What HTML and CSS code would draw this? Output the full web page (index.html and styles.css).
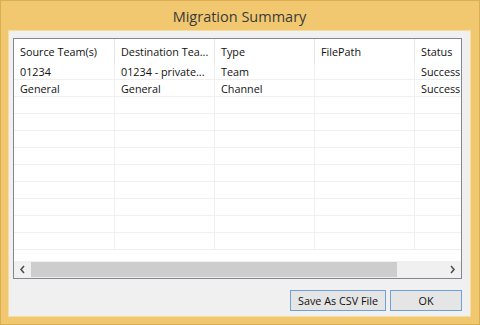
FILE: index.html
```html
<!DOCTYPE html>
<html>
<head>
  <title>Migration Summary</title>
  <link rel="stylesheet" href="styles.css">
</head>
<body>
  <div class="window">
    <div class="titlebar">Migration Summary</div>
    <div class="client">
      <div class="listview">
        <div class="grid">
          <div class="row header">
            <div class="cell c1">Source Team(s)</div>
            <div class="cell">Destination Tea...</div>
            <div class="cell">Type</div>
            <div class="cell">FilePath</div>
            <div class="cell">Status</div>
          </div>
          <div class="row">
            <div class="cell c1">01234</div>
            <div class="cell">01234 - private...</div>
            <div class="cell">Team</div>
            <div class="cell"></div>
            <div class="cell">Success</div>
          </div>
          <div class="row">
            <div class="cell c1">General</div>
            <div class="cell">General</div>
            <div class="cell">Channel</div>
            <div class="cell"></div>
            <div class="cell">Success</div>
          </div>
          <div class="row"><div class="cell c1"></div><div class="cell"></div><div class="cell"></div><div class="cell"></div><div class="cell"></div></div>
          <div class="row"><div class="cell c1"></div><div class="cell"></div><div class="cell"></div><div class="cell"></div><div class="cell"></div></div>
          <div class="row"><div class="cell c1"></div><div class="cell"></div><div class="cell"></div><div class="cell"></div><div class="cell"></div></div>
          <div class="row"><div class="cell c1"></div><div class="cell"></div><div class="cell"></div><div class="cell"></div><div class="cell"></div></div>
          <div class="row"><div class="cell c1"></div><div class="cell"></div><div class="cell"></div><div class="cell"></div><div class="cell"></div></div>
          <div class="row"><div class="cell c1"></div><div class="cell"></div><div class="cell"></div><div class="cell"></div><div class="cell"></div></div>
          <div class="row"><div class="cell c1"></div><div class="cell"></div><div class="cell"></div><div class="cell"></div><div class="cell"></div></div>
          <div class="row"><div class="cell c1"></div><div class="cell"></div><div class="cell"></div><div class="cell"></div><div class="cell"></div></div>
          <div class="row"><div class="cell c1"></div><div class="cell"></div><div class="cell"></div><div class="cell"></div><div class="cell"></div></div>
        </div>
        <div class="hscroll">
          <div class="arrow">
            <svg width="7" height="9" viewBox="0 0 7 9"><path d="M5 1 L2 4.5 L5 8" fill="none" stroke="#505050" stroke-width="1.6"/></svg>
          </div>
          <div class="track"><div class="thumb"></div></div>
          <div class="arrow">
            <svg width="7" height="9" viewBox="0 0 7 9"><path d="M2 1 L5 4.5 L2 8" fill="none" stroke="#505050" stroke-width="1.6"/></svg>
          </div>
        </div>
      </div>
      <div class="buttons">
        <button class="btn save">Save As CSV File</button>
        <button class="btn ok">OK</button>
      </div>
    </div>
  </div>
</body>
</html>
```

FILE: styles.css
```css
body {
  margin: 0;
  font-family: "Open Sans", "Noto Sans", sans-serif;
}

.window {
  width: 480px;
  height: 325px;
  box-sizing: border-box;
  background-color: #f1c86f;
  border: 1px solid #dcae52;
  padding: 0 8px 7px 7px;
  display: flex;
  flex-direction: column;
}

.titlebar {
  height: 29px;
  line-height: 31px;
  text-align: center;
  font-size: 14.5px;
  color: #3a3a3a;
}

.client {
  flex: 1;
  background-color: #f0f0f0;
  border: 1px solid #f7dc9f;
  padding: 7px 8px 5px 4px;
  display: flex;
  flex-direction: column;
}

.listview {
  height: 241px;
  box-sizing: border-box;
  border: 1px solid #828790;
  background-color: #fff;
  display: flex;
  flex-direction: column;
  overflow: hidden;
}

.grid {
  flex: 1;
  overflow: hidden;
}

.row {
  display: flex;
  height: 17px;
  border-bottom: 1px solid #f0f0f0;
  box-sizing: border-box;
}

.row.header {
  height: 24px;
  border-bottom: none;
}

.cell {
  flex: 0 0 100px;
  box-sizing: border-box;
  padding-left: 6px;
  border-right: 1px solid #f0f0f0;
  font-size: 10.8px;
  line-height: 17px;
  color: #111;
  white-space: nowrap;
  overflow: hidden;
}

.cell.c1 {
  flex-basis: 101px;
}

.header .cell {
  line-height: 25px;
  border-right: 1px solid #e5e5e5;
}

.hscroll {
  height: 17px;
  display: flex;
  background-color: #f0f0f0;
}

.arrow {
  width: 17px;
  display: flex;
  align-items: center;
  justify-content: center;
}

.track {
  flex: 1;
  display: flex;
  padding: 1px 0;
}

.thumb {
  width: 366px;
  background-color: #cdcdcd;
}

.buttons {
  margin-top: 11px;
  display: flex;
  justify-content: flex-end;
  gap: 4px;
}

.btn {
  height: 21px;
  box-sizing: border-box;
  border: 1px solid #6ea2d2;
  background-color: #e5e5e5;
  font-family: "Open Sans", "Noto Sans", sans-serif;
  font-size: 10.8px;
  color: #111;
  padding: 0;
}

.btn.save {
  width: 96px;
}

.btn.ok {
  width: 72px;
}
```
